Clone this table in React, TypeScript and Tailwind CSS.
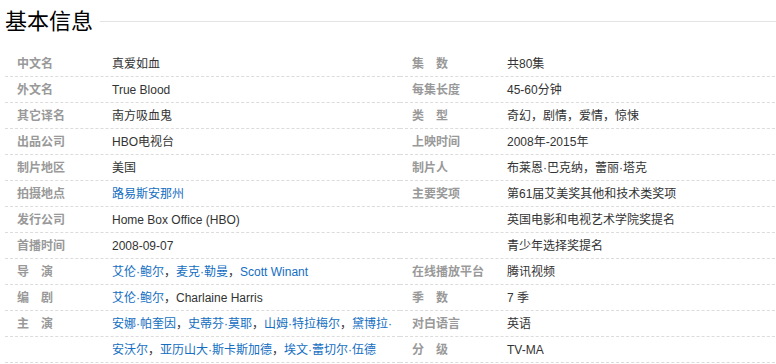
import React from "react";

type Val = { t: string; link?: boolean }[];
type Row = { label: string[]; value: Val };

const font = '"Liberation Sans", Arial, "Noto Sans CJK SC", sans-serif';

const left: Row[] = [
  { label: ["中文名"], value: [{ t: "真爱如血" }] },
  { label: ["外文名"], value: [{ t: "True Blood" }] },
  { label: ["其它译名"], value: [{ t: "南方吸血鬼" }] },
  { label: ["出品公司"], value: [{ t: "HBO电视台" }] },
  { label: ["制片地区"], value: [{ t: "美国" }] },
  { label: ["拍摄地点"], value: [{ t: "路易斯安那州", link: true }] },
  { label: ["发行公司"], value: [{ t: "Home Box Office (HBO)" }] },
  { label: ["首播时间"], value: [{ t: "2008-09-07" }] },
  {
    label: ["导", "演"],
    value: [
      { t: "艾伦·鲍尔", link: true },
      { t: "，" },
      { t: "麦克·勒曼", link: true },
      { t: "，" },
      { t: "Scott Winant", link: true },
    ],
  },
  {
    label: ["编", "剧"],
    value: [{ t: "艾伦·鲍尔", link: true }, { t: "，Charlaine Harris" }],
  },
  {
    label: ["主", "演"],
    value: [
      { t: "安娜·帕奎因", link: true },
      { t: "，" },
      { t: "史蒂芬·莫耶", link: true },
      { t: "，" },
      { t: "山姆·特拉梅尔", link: true },
      { t: "，" },
      { t: "黛博拉·", link: true },
    ],
  },
  {
    label: [],
    value: [
      { t: "安沃尔", link: true },
      { t: "，" },
      { t: "亚历山大·斯卡斯加德", link: true },
      { t: "，" },
      { t: "埃文·蕾切尔·伍德", link: true },
    ],
  },
];

const right: Row[] = [
  { label: ["集", "数"], value: [{ t: "共80集" }] },
  { label: ["每集长度"], value: [{ t: "45-60分钟" }] },
  { label: ["类", "型"], value: [{ t: "奇幻，剧情，爱情，惊悚" }] },
  { label: ["上映时间"], value: [{ t: "2008年-2015年" }] },
  { label: ["制片人"], value: [{ t: "布莱恩·巴克纳，蕾丽·塔克" }] },
  { label: ["主要奖项"], value: [{ t: "第61届艾美奖其他和技术类奖项" }] },
  { label: [], value: [{ t: "英国电影和电视艺术学院奖提名" }] },
  { label: [], value: [{ t: "青少年选择奖提名" }] },
  { label: ["在线播放平台"], value: [{ t: "腾讯视频" }] },
  { label: ["季", "数"], value: [{ t: "7 季" }] },
  { label: ["对白语言"], value: [{ t: "英语" }] },
  { label: ["分", "级"], value: [{ t: "TV-MA" }] },
];

function Label({ parts }: { parts: string[] }) {
  if (parts.length === 2) {
    return (
      <span className="whitespace-nowrap">
        <span>{parts[0]}</span>
        <span className="ml-3">{parts[1]}</span>
      </span>
    );
  }
  return <span className="whitespace-nowrap">{parts[0] ?? ""}</span>;
}

function Block({ rows }: { rows: Row[] }) {
  return (
    <div className="flex w-[395px] shrink-0 flex-col">
      {rows.map((r, i) => (
        <div
          key={i}
          className="flex h-[26px] items-center border-b border-dashed border-[#dcdcdc] pt-px text-[12px]"
        >
          <div className="w-[107px] shrink-0 pl-3 font-bold text-[#999999]">
            <Label parts={r.label} />
          </div>
          <div className="whitespace-nowrap text-[#333333]">
            {r.value.map((v, j) =>
              v.link ? (
                <span key={j} className="text-[#136ec2]">
                  {v.t}
                </span>
              ) : (
                <span key={j}>{v.t}</span>
              )
            )}
          </div>
        </div>
      ))}
    </div>
  );
}

export default function App() {
  return (
    <div
      className="h-[364px] w-[776px] overflow-hidden bg-white"
      style={{ fontFamily: font }}
    >
      <div className="flex h-[51px] items-start pl-[5px] pt-[7px]">
        <h2 className="text-[22px] leading-[30px] font-normal text-black">
          基本信息
        </h2>
        <div className="mt-[14px] ml-[7px] h-px flex-1 bg-[#e3e3e3]" />
      </div>
      <div className="flex pl-[5px]">
        <Block rows={left} />
        <Block rows={right} />
      </div>
    </div>
  );
}
